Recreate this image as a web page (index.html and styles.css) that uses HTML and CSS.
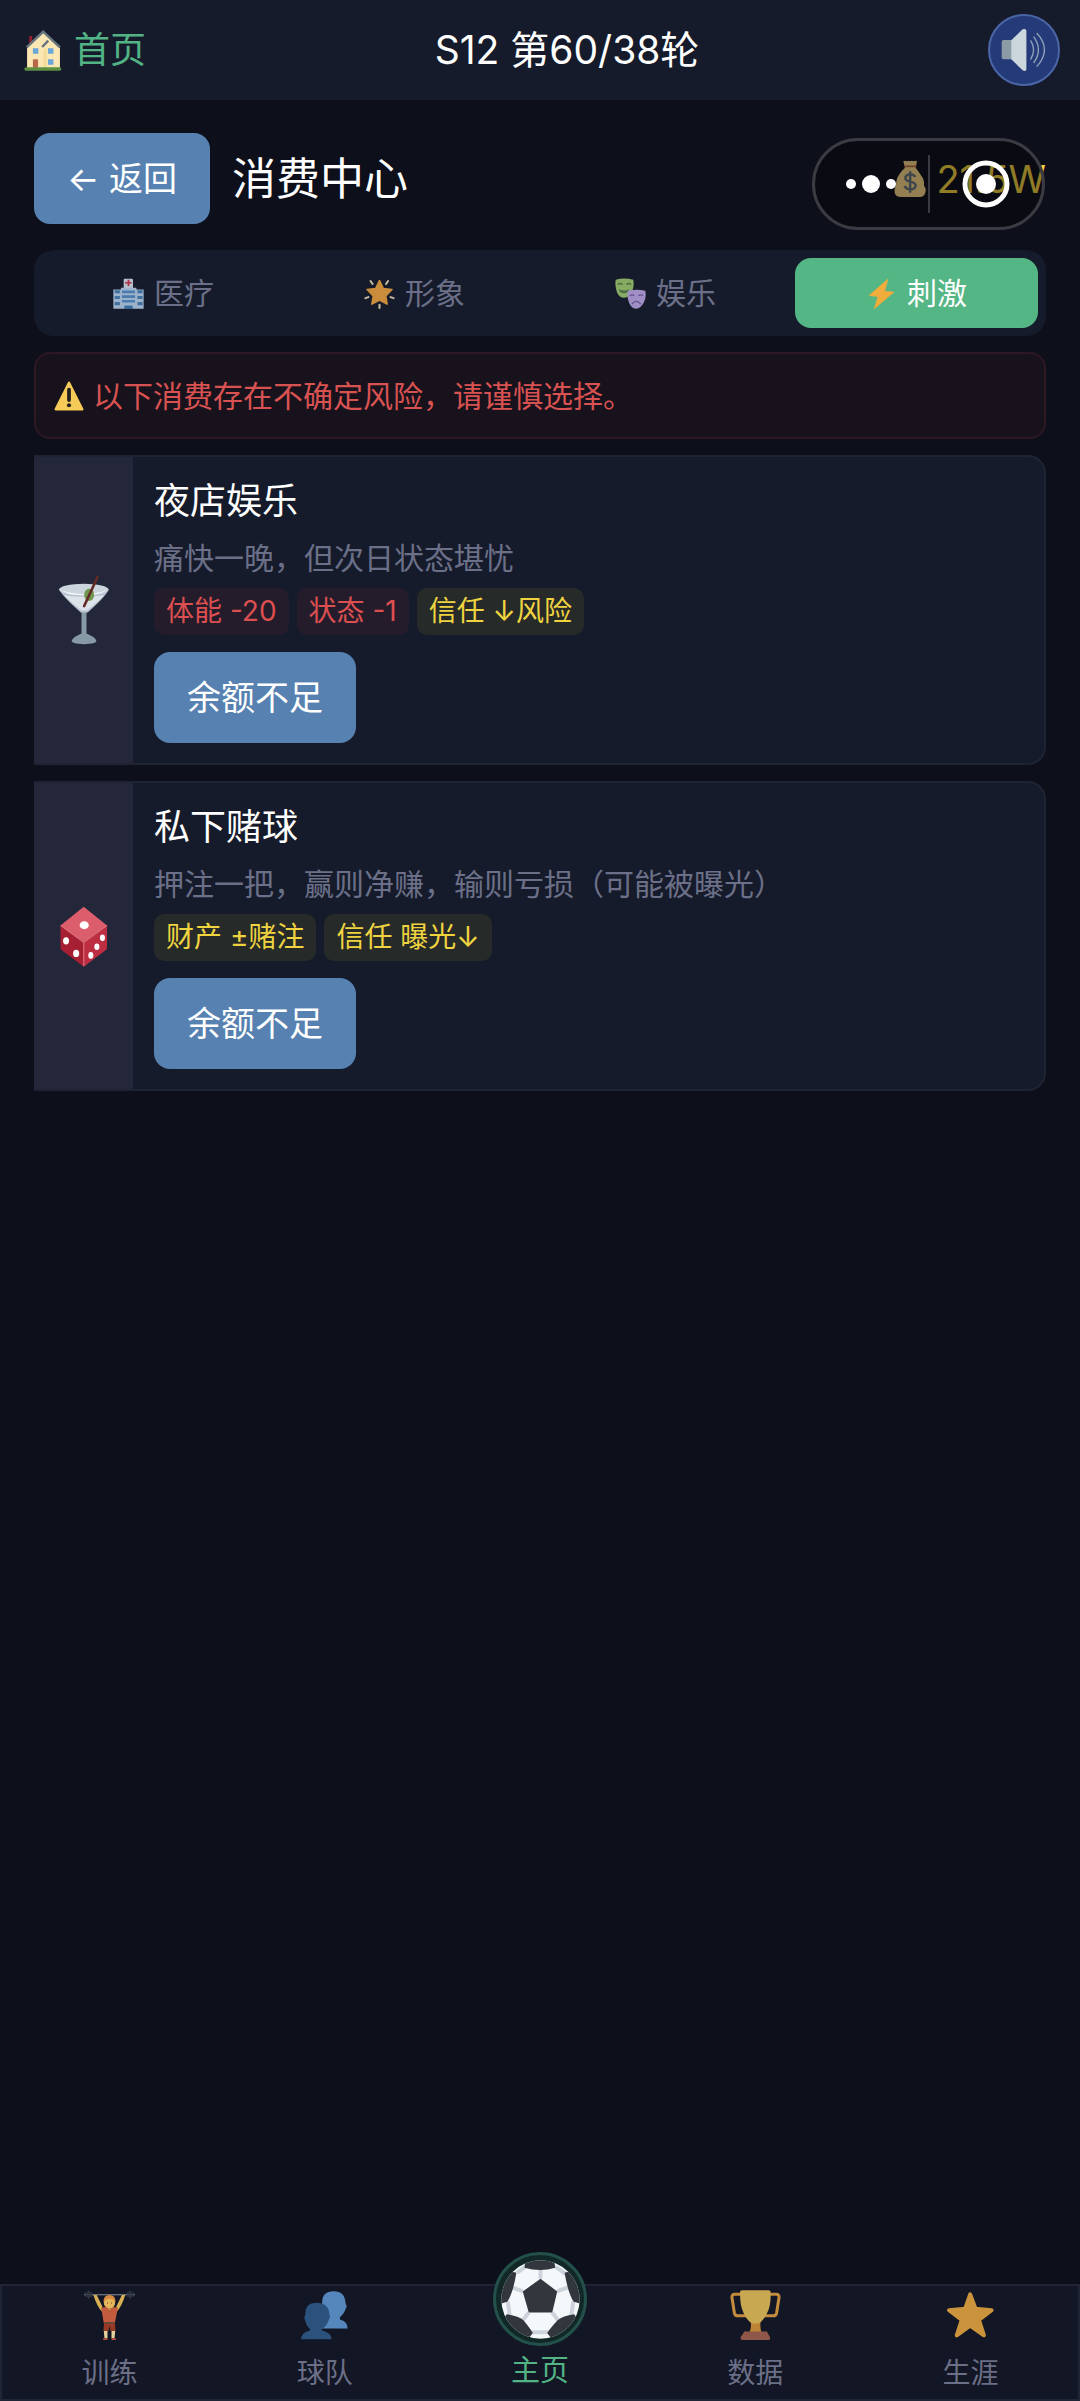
FILE: index.html
```html
<!DOCTYPE html>
<html lang="zh-CN">
<head>
<meta charset="utf-8">
<meta name="viewport" content="width=device-width, initial-scale=1">
<title>消费中心</title>
<link rel="stylesheet" href="styles.css">
</head>
<body>
<header class="topbar">
  <a class="home" href="#home">
    <svg class="home-icon" viewBox="68 90 111 123" preserveAspectRatio="none" aria-hidden="true">
      <path d="M83 108h9v22h-9z" fill="#8e1f2d"/>
      <path d="M77 143L124 98l49 46v60H77z" fill="#fbe7b4"/>
      <path d="M124 150l11-8v62h-11z" fill="#f5dc9c"/>
      <path d="M76 142L124 95l49 47M121 141l18-19" fill="none" stroke="#66757f" stroke-width="7"/>
      <path d="M94 145h16v16H94zM138 145h16v16h-16zM138 178h16v16h-16z" fill="#6aa6d8"/>
      <path d="M94 178h15v26H94z" fill="#b96749"/>
      <rect x="69" y="202" width="108" height="10" rx="5" fill="#5d9040"/>
    </svg>
    <span>首页</span>
  </a>
  <div class="round">S12 第60/38轮</div>
  <button class="sound" type="button" aria-label="声音">
    <svg viewBox="1340 84 134 132" preserveAspectRatio="none" aria-hidden="true">
      <rect x="1342" y="120" width="40" height="58" rx="6" fill="#8b9ca6"/>
      <path d="M1370 121L1403 88q11-4 11 6v112q0 10-11 5L1370 178z" fill="#ccd6dd"/>
      <path d="M1426 121q18 28 0 58M1435 110q28 39 0 79M1444 99q45 50 0 101" fill="none" stroke="#8ea0b9" stroke-width="4"/>
    </svg>
  </button>
</header>

<main class="page">
  <div class="heading">
    <button class="btn" type="button">← 返回</button>
    <h1>消费中心</h1>
    <div class="money">
      <svg class="bag" viewBox="1034 482 96 114" preserveAspectRatio="none" aria-hidden="true">
        <path d="M1061 486q6-4 10 0 5-4 10 0 5-4 10 0 6-4 10 0l-4 19q8 10 15 22 12 16 9 32 8 9 4 21-4 13-16 13h-57q-15-1-16-14-2-10 4-21-1-18 10-34 8-12 16-19z" fill="#fbd889"/>
        <path d="M1064 501h35" stroke="#bd6a40" stroke-width="5"/>
        <path d="M1096 533q-5-9-16-8-13 2-13 11 0 8 15 11 16 4 15 13-2 10-16 10-12 0-16-10M1081 516v64" fill="none" stroke="#67757f" stroke-width="7"/>
      </svg>
      <span>21.5W</span>
    </div>
    <div class="capsule">
      <button type="button" aria-label="更多">
        <svg width="50" height="18" viewBox="0 0 50 18" aria-hidden="true"><g fill="#fff"><circle cx="5" cy="9" r="5"/><circle cx="25" cy="9" r="9"/><circle cx="45" cy="9" r="5"/></g></svg>
      </button>
      <button type="button" aria-label="关闭">
        <svg width="48" height="48" viewBox="0 0 48 48" aria-hidden="true"><circle cx="24" cy="24" r="21" fill="none" stroke="#fff" stroke-width="5"/><circle cx="24" cy="24" r="10" fill="#fff"/></svg>
      </button>
    </div>
  </div>

  <nav class="tabs" aria-label="消费分类">
    <button class="tab" type="button">
      <svg viewBox="328 143 90 92" preserveAspectRatio="none" aria-hidden="true">
        <rect x="359" y="145" width="27" height="30" rx="3" fill="#b9bfca"/>
        <path d="M373 148v19M363 157h19" stroke="#b02e45" stroke-width="5"/>
        <path d="M329 177h22v-5h45v5h21v57h-88z" fill="#9db2cb"/>
        <path d="M333 184h15M333 201h15M333 219h15M399 184h15M399 201h15M399 219h15" stroke="#41719f" stroke-width="9"/>
        <path d="M354 184h38M354 198h38M354 212h38" stroke="#4a7cb0" stroke-width="8"/>
        <path d="M361 225h24v10h-24z" fill="#376a9b"/>
      </svg><span>医疗</span>
    </button>
    <button class="tab" type="button">
      <svg viewBox="1058 141 90 94" preserveAspectRatio="none" aria-hidden="true">
        <path d="M1103 149l11 24 25 3-18 19 4 25-22-12-22 12 4-25-18-19 25-3z" fill="#c98d3c" stroke="#c98d3c" stroke-width="5" stroke-linejoin="round"/>
        <path d="M1077 150l6 9M1128 150l-6 9M1062 202l9-3M1144 202l-9-3M1103 222v10" stroke="#c5bca2" stroke-width="6" stroke-linecap="round"/>
      </svg><span>形象</span>
    </button>
    <button class="tab" type="button">
      <svg viewBox="220 142 90 94" preserveAspectRatio="none" aria-hidden="true">
        <path d="M222 147q25-7 51 0 4 22-5 39-9 16-22 16t-20-16q-7-20-4-39z" fill="#86ab63"/>
        <path d="M228 162q7-7 14 0M253 162q7-7 14 0" fill="none" stroke="#4b6b40" stroke-width="4"/>
        <path d="M231 176q15 8 30 0-3 12-15 12t-15-12z" fill="#4b6b40"/>
        <path d="M257 181q25-7 51 0 4 22-5 37-9 17-22 17t-20-17q-7-18-4-37z" fill="#9f8fc4"/>
        <path d="M263 196q7-6 13 0M288 196q7-6 13 0M269 221q13-16 26 0" fill="none" stroke="#64528f" stroke-width="4"/>
      </svg><span>娱乐</span>
    </button>
    <button class="tab active" type="button" aria-current="page">
      <svg viewBox="950 144 90 92" preserveAspectRatio="none" aria-hidden="true">
        <path d="M1014 147l-55 49 26 3-11 36 57-49-27-3z" fill="#f2ac3c" stroke="#f2ac3c" stroke-width="2" stroke-linejoin="round"/>
      </svg><span>刺激</span>
    </button>
  </nav>

  <p class="warning">
    <svg viewBox="157 454 88 88" preserveAspectRatio="none" aria-hidden="true">
      <path d="M201 459L162 537h78z" fill="#f7cb58" stroke="#f7cb58" stroke-width="7" stroke-linejoin="round"/>
      <path d="M201 479v31" stroke="#231f20" stroke-width="11" stroke-linecap="round"/>
      <circle cx="201" cy="525" r="6" fill="#231f20"/>
    </svg>
    <span>以下消费存在不确定风险，请谨慎选择。</span>
  </p>

  <section class="card">
    <div class="card-icon">
      <svg width="50" height="70" viewBox="150 423 131 181" aria-hidden="true">
        <path d="M183 595q2-10 26-20v-62h13v62q25 10 26 20 0 8-32 8t-33-8z" fill="#8899a6"/>
        <path d="M151 461h129q-9 18-55 59h-18q-47-42-56-59z" fill="#b8c4cf"/>
        <path d="M163 475q52 8 105 0-15 17-45 40h-14q-31-24-46-40z" fill="#dce3e9"/>
        <ellipse cx="215" cy="460" rx="65" ry="15" fill="#ccd4dd"/>
        <path d="M156 462q60 20 119 0-16 13-60 13t-59-13z" fill="#f4f7fa"/>
        <ellipse cx="229" cy="474" rx="13" ry="16" fill="#70994d"/>
        <path d="M216 503L251 427" stroke="#642a26" stroke-width="7" stroke-linecap="round"/>
      </svg>
    </div>
    <div class="card-body">
      <h2>夜店娱乐</h2>
      <p class="desc">痛快一晚，但次日状态堪忧</p>
      <div class="tags"><span class="tag bad">体能 -20</span><span class="tag bad">状态 -1</span><span class="tag risk">信任 ↓风险</span></div>
      <button class="btn" type="button">余额不足</button>
    </div>
  </section>

  <section class="card">
    <div class="card-icon">
      <svg width="48" height="61" viewBox="117 404 95 184" preserveAspectRatio="none" aria-hidden="true">
        <path d="M164 406l46 57-46 50-46-50z" fill="#dc5e6c"/>
        <path d="M118 463l46 52v72l-44-50q-2-3-2-8z" fill="#a71f32"/>
        <path d="M210 463l-46 52v72l44-50q2-3 2-8z" fill="#bd2e43"/>
        <path d="M118 463l46 51 46-51M164 514v72" fill="none" stroke="#ea7a84" stroke-width="2"/>
        <g fill="#fff"><ellipse cx="165" cy="462" rx="9" ry="12"/><ellipse cx="129" cy="509" rx="6" ry="11"/><ellipse cx="149" cy="547" rx="6" ry="11"/><ellipse cx="201" cy="500" rx="5" ry="10"/><ellipse cx="190" cy="527" rx="5" ry="10"/><ellipse cx="178" cy="553" rx="5" ry="10"/></g>
      </svg>
    </div>
    <div class="card-body">
      <h2>私下赌球</h2>
      <p class="desc">押注一把，赢则净赚，输则亏损（可能被曝光）</p>
      <div class="tags"><span class="tag risk">财产 ±赌注</span><span class="tag risk">信任 曝光↓</span></div>
      <button class="btn" type="button">余额不足</button>
    </div>
  </section>
</main>

<nav class="bottom" aria-label="主导航">
  <a href="#train">
    <svg viewBox="248 148 152 152" aria-hidden="true">
      <path d="M248 162h152" stroke="#87939b" stroke-width="3"/>
      <path d="M255 155v14M262 150v24M269 155v14M379 155v14M386 150v24M393 155v14" stroke="#30363f" stroke-width="6"/>
      <path d="M276 163h10l17 35-2 14q-14-14-25-49zM371 163h-10l-17 35 2 14q14-14 25-49z" fill="#d7b153"/>
      <path d="M299 201l14-2q11 6 22 0l14 2-9 45h-33z" fill="#c35c3f"/>
      <circle cx="324" cy="186" r="17" fill="#e4b75a"/>
      <path d="M306 184q0-21 18-21t18 21q-8-12-18-10-10-1-18 10z" fill="#d98c3d"/>
      <path d="M318 185v4M330 185v4M317 206q7 9 14 0" stroke="#a5522e" stroke-width="3" fill="#d7b153"/>
      <path d="M308 243h32l2 27h-15l-3-15-3 15h-15z" fill="#963926"/>
      <path d="M311 246h26" stroke="#5e4c40" stroke-width="5"/>
      <path d="M307 270h11v22h-9zM330 270h11l-2 22h-9z" fill="#e5d29a"/>
      <path d="M305 292h13v5h-13zM330 292h13v5h-13z" fill="#b64d3a"/>
    </svg><span>训练</span>
  </a>
  <a href="#team">
    <svg viewBox="896 146 152 152" aria-hidden="true">
      <path d="M965 187q-2-37 35-37 33 0 35 37 6 8 0 15-4 15-17 25v7q23 6 23 27h-76z" fill="#5587bd"/>
      <path d="M915 220q-2-36 34-36 35 0 38 35 4 9-2 16-4 16-21 29v3q29 6 29 26h-91q0-20 27-26v-4q-12-10-14-25-6-9 0-18z" fill="#2b517d"/>
    </svg><span>球队</span>
  </a>
  <a class="current" href="#main" aria-current="page">
    <span class="ball">
      <svg viewBox="302 56 236 236" aria-hidden="true">
        <defs><clipPath id="ball"><circle cx="420" cy="174" r="117"/></clipPath></defs>
        <g clip-path="url(#ball)">
          <path d="M302 56h236v236H302z" fill="#f5f8fa"/>
          <path d="M420 112V75M470 150l36-14M455 213l22 28M385 213l-22 28M367 150l-36-14M350 94l26-18M464 76l32 22M322 180l6 42M518 180l-6 42M394 272h52" stroke="#ccd3db" stroke-width="12"/>
          <path d="M420 112l50 38-15 63h-70l-18-63z" fill="#31373d"/>
          <path d="M372 79l4-30h84l4 30q-44 14-92 0zM348 94q-10 60-27 87l-30 8V80zM492 94q10 60 27 87l30 8V80zM319 218q35 4 50 18 20 24 28 38l-20 26-80-50zM521 218q-35 4-50 18-22 24-31 38l20 26 80-50z" fill="#31373d"/>
        </g>
      </svg>
    </span>
    <span>主页</span>
  </a>
  <a href="#data">
    <svg viewBox="152 148 152 152" aria-hidden="true">
      <path d="M190 161h-24q-9 0-8 10l7 45q2 9 10 9h27M266 161h24q9 0 8 10l-7 45q-2 9-10 9h-27" fill="none" stroke="#c48b3c" stroke-width="9"/>
      <path d="M212 235h32q-4 22 2 40h-36q8-22 2-40z" fill="#bd8337"/>
      <path d="M182 154q0-5 6-5h79q6 0 6 5 2 40-11 64-12 24-26 30h-17q-14-6-26-30-12-24-11-64z" fill="#c9a852"/>
      <path d="M194 272h68q4 8 8 14 5 11-4 11h-76q-10 0-5-11 7-6 9-14z" fill="#8f574a"/>
    </svg><span>数据</span>
  </a>
  <a href="#career">
    <svg viewBox="800 151 152 152" aria-hidden="true">
      <path d="M875 164l16 43 48 4-38 29 15 46-41-29-40 29 15-46-38-29 48-4z" fill="#cb933c" stroke="#cb933c" stroke-width="12" stroke-linejoin="round"/>
    </svg><span>生涯</span>
  </a>
</nav>
</body>
</html>
```
FILE: styles.css
```css
* { box-sizing: border-box; }

body {
  margin: 0;
  min-height: 100vh;
  display: flex;
  flex-direction: column;
  background: #0d0f1a;
  color: #fff;
  font-family: Inter, "Noto Sans CJK SC", sans-serif;
  font-size: 30px;
  line-height: 44px;
}

h1, h2, p { margin: 0; font-weight: 400; }
button { border: 0; margin: 0; font: inherit; color: inherit; cursor: pointer; }
a { color: inherit; text-decoration: none; }
svg { display: block; flex: none; }

.topbar {
  display: flex;
  align-items: center;
  justify-content: space-between;
  height: 100px;
  padding: 0 20px 0 24px;
  background: #161b2b;
}
.home {
  display: flex;
  align-items: center;
  gap: 12px;
  color: #52b385;
  font-size: 36px;
}
.home-icon { width: 38px; height: 41px; }
.round { font-size: 39px; }
.sound {
  display: grid;
  place-items: center;
  width: 72px;
  height: 72px;
  padding: 0;
  border: 2px solid #4a66a6;
  border-radius: 50%;
  background: #243a79;
}
.sound svg { width: 46px; height: 44px; }

.page {
  flex: 1;
  display: flex;
  flex-direction: column;
  gap: 16px;
  padding: 33px 34px 60px;
}

.heading {
  position: relative;
  display: flex;
  align-items: center;
  gap: 22px;
  height: 101px;
  padding-bottom: 10px;
}
.heading h1 { font-size: 44px; }
.btn {
  height: 91px;
  padding: 0 33px;
  border-radius: 16px;
  background: #5681b1;
  font-size: 34px;
}
.money {
  display: flex;
  align-items: center;
  gap: 9px;
  margin-left: auto;
  color: #f5d33d;
  font-size: 38px;
}
.bag { width: 33px; height: 38px; }

/* Floating host-app control, drawn over the balance */
.capsule {
  position: absolute;
  top: 5px;
  right: 1px;
  display: flex;
  width: 233px;
  height: 92px;
  border: 3px solid #3b3c43;
  border-radius: 46px;
  background: rgba(4, 5, 8, 0.42);
}
.capsule button {
  flex: 1;
  display: grid;
  place-items: center;
  padding: 0;
  background: none;
}
.capsule::before {
  content: "";
  order: 1;
  width: 2px;
  height: 58px;
  align-self: center;
  background: #3b3c43;
}
.capsule button:last-child { order: 2; }

.tabs {
  display: flex;
  gap: 8px;
  padding: 8px;
  border-radius: 20px;
  background: #161b2b;
}
.tab {
  flex: 1;
  display: flex;
  align-items: center;
  justify-content: center;
  gap: 10px;
  height: 70px;
  padding: 0;
  border-radius: 16px;
  background: none;
  color: #6b7088;
}
.tab svg { width: 31px; height: 31px; }
.tab.active { background: #55b685; color: #fff; }

.warning {
  display: flex;
  align-items: center;
  gap: 9px;
  height: 87px;
  padding: 0 18px;
  border: 2px solid #2e1824;
  border-radius: 16px;
  background: #17121c;
  color: #d95252;
}
.warning svg { width: 30px; height: 30px; }

.card {
  display: flex;
  border: 2px solid #1f2435;
  border-left: 0;
  border-radius: 0 18px 18px 0;
  background: #161b2b;
}
.card-icon {
  display: grid;
  place-items: center;
  flex: none;
  width: 99px;
  background: #24273a;
}
.card-body {
  display: flex;
  flex-direction: column;
  align-items: flex-start;
  padding: 20px 21px;
}
.card h2 { font-size: 36px; line-height: 48px; }
.desc { margin-top: 11px; color: #6b7088; }
.tags { display: flex; gap: 8px; margin: 8px 0 17px; }
.tag {
  height: 47px;
  padding: 0 12px;
  border-radius: 10px;
  font-size: 28px;
  line-height: 47px;
}
.tag.bad { background: #251c2b; color: #db4f50; }
.tag.risk { background: #262a29; color: #efd440; }

.bottom {
  display: flex;
  height: 117px;
  border: 2px solid #202536;
  background: #131624;
}
.bottom a {
  flex: 1;
  display: flex;
  flex-direction: column;
  align-items: center;
  gap: 10px;
  padding-top: 4px;
  color: #6b7088;
  font-size: 28px;
}
.bottom a > svg { width: 51px; height: 51px; }
.bottom .current {
  gap: 0;
  margin-top: -34px;
  padding: 0;
  color: #52b385;
  font-size: 29px;
}
.ball {
  display: grid;
  place-items: center;
  width: 94px;
  height: 94px;
  margin-bottom: 3px;
  border: 3px solid #23504a;
  border-radius: 50%;
  background: #122827;
}
.ball svg { width: 79px; height: 79px; }
```
